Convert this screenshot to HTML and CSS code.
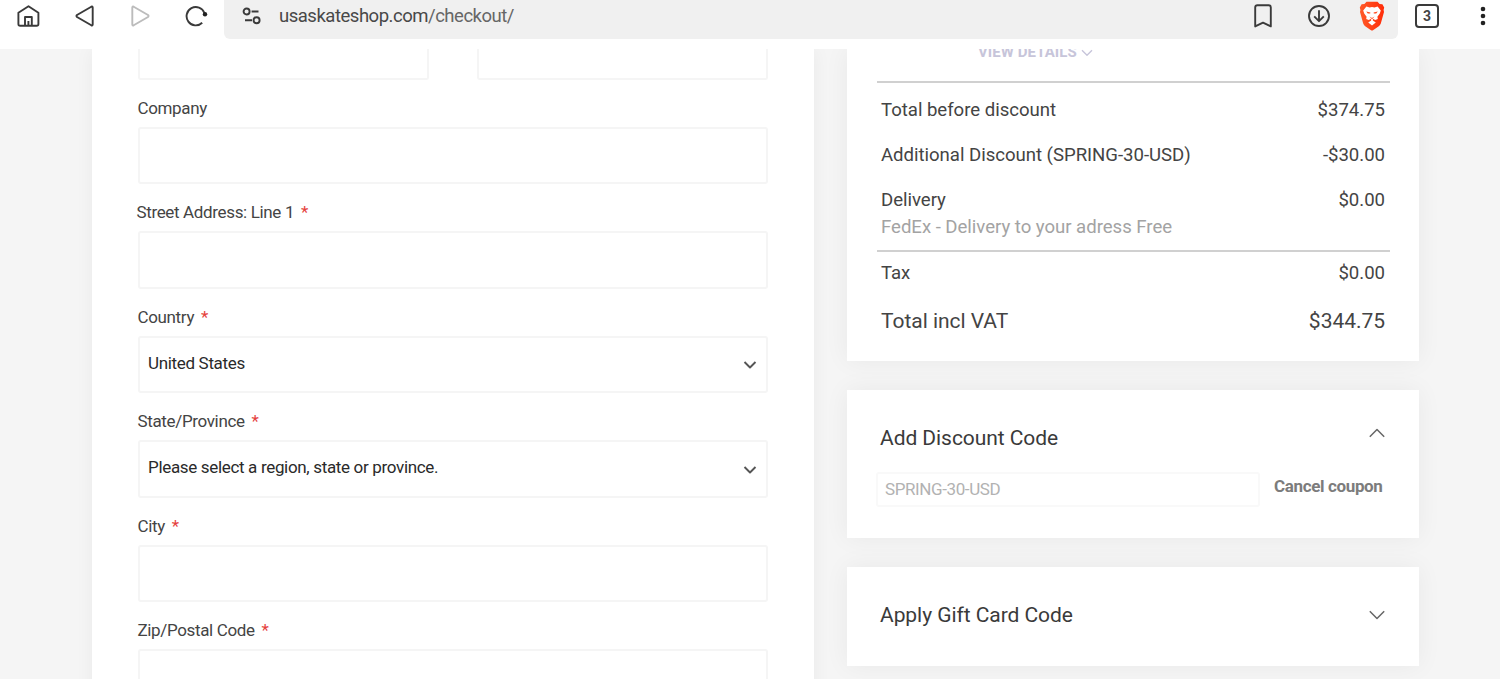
FILE: index.html
```
<!DOCTYPE html>
<html lang="en">
<head>
    <meta charset="UTF-8">
    <meta name="viewport" content="width=device-width, initial-scale=1.0">
    <title>Checkout</title>
    <link rel="stylesheet" href="styles.css">
</head>
<body>

    <header class="browser-bar">
        <nav class="nav-icons">
            <svg class="home" width="24" height="24" viewBox="0 0 24 24"><path d="M2.4 8.8 L12.5 2.2 L22.4 8.8 V20 Q22.4 21.8 20.6 21.8 H4.2 Q2.4 21.8 2.4 20 Z M9 21.8 V13 H15.8 V21.8 M12.4 17 V21.8"/></svg>
            <svg class="back" width="20" height="22" viewBox="0 0 20 22"><path d="M17.7 2.4 V19.6 Q17.7 21 16.3 20.3 L2 12 Q1 11 2 10 L16.3 1.7 Q17.7 1 17.7 2.4 Z"/></svg>
            <svg class="forward" width="20" height="22" viewBox="0 0 20 22"><path d="M2.3 2.4 V19.6 Q2.3 21 3.7 20.3 L18 12 Q19 11 18 10 L3.7 1.7 Q2.3 1 2.3 2.4 Z"/></svg>
            <svg class="reload" width="24" height="22" viewBox="0 0 24 22"><path d="M17.2 17.8 A9.2 9.2 0 1 1 19.4 8"/><circle cx="20" cy="9.2" r="2.2"/></svg>
        </nav>
        <div class="url-bar">
            <svg class="tune" width="20" height="18" viewBox="0 0 20 18"><circle cx="4.6" cy="4.5" r="3"/><circle cx="14.6" cy="13.3" r="3"/><path d="M9.6 4.5 H16.5 M3 13.3 H10"/></svg>
            <span class="url">usaskateshop.com<span class="url-path">/checkout/</span></span>
            <svg class="bookmark" width="20" height="24" viewBox="0 0 20 24"><path d="M2.2 3.4 Q2.2 1.2 4.4 1.2 H15.6 Q17.8 1.2 17.8 3.4 V22.4 L10 18.6 L2.2 22.4 Z"/></svg>
            <svg class="download" width="24" height="24" viewBox="0 0 24 24"><circle cx="12" cy="12" r="10"/><path d="M12 6.2 V17 M7.2 12.4 L12 17.2 L16.8 12.4"/></svg>
            <svg class="shield" width="26" height="30" viewBox="0 0 26 30">
                <defs><linearGradient id="lion"><stop offset="0" stop-color="#ff5a28"/><stop offset="1" stop-color="#ff2c08"/></linearGradient></defs>
                <path fill="url(#lion)" d="M7.5 0.8 H18.5 L20.6 3 L23.4 3.2 L25.2 6.6 L24.6 9 L25 11 L21.8 22.6 Q21.2 24.2 19.8 25.2 L14 29.2 Q13 29.8 12 29.2 L6.2 25.2 Q4.8 24.2 4.2 22.6 L1 11 L1.4 9 L0.8 6.6 L2.6 3.2 L5.4 3 Z"/>
                <path fill="#fff" d="M7.4 5.6 L10.6 6.4 L13 6 L15.4 6.4 L18.6 5.6 L21.8 9.4 L20.8 12.4 L18.4 15.8 L18.8 18 L16.2 19 L14 17.8 L13.8 19.6 L16.8 21.4 L13 24.4 L9.2 21.4 L12.2 19.6 L12 17.8 L9.8 19 L7.2 18 L7.6 15.8 L5.2 12.4 L4.2 9.4 Z"/>
                <path fill="#ff4a1e" d="M7.2 10.6 L11.4 11.6 L11.2 12.6 L8.8 12.6 Z M18.8 10.6 L14.6 11.6 L14.8 12.6 L17.2 12.6 Z M10.4 15.6 L13 17 L15.6 15.6 L13 18.2 Z"/>
            </svg>
        </div>
        <span class="tab-count">3</span>
        <svg class="menu" width="6" height="20" viewBox="0 0 6 20"><circle cx="3" cy="3" r="2.3"/><circle cx="3" cy="10" r="2.3"/><circle cx="3" cy="17" r="2.3"/></svg>
    </header>

    <main class="checkout">
        <form class="address-form">
            <div class="name-row">
                <div class="field"></div>
                <div class="field"></div>
            </div>
            <div class="group">
                <label class="label-company">Company</label>
                <div class="field"></div>
            </div>
            <div class="group">
                <label class="label-street">Street Address: Line 1 <span class="required">*</span></label>
                <div class="field"></div>
            </div>
            <div class="group">
                <label>Country <span class="required">*</span></label>
                <div class="field select">
                    <span class="country">United States</span>
                    <svg width="14" height="10" viewBox="0 0 14 10"><path d="M1.5 2 L7 7.5 L12.5 2"/></svg>
                </div>
            </div>
            <div class="group">
                <label>State/Province <span class="required">*</span></label>
                <div class="field select">
                    <span>Please select a region, state or province.</span>
                    <svg width="14" height="10" viewBox="0 0 14 10"><path d="M1.5 2 L7 7.5 L12.5 2"/></svg>
                </div>
            </div>
            <div class="group">
                <label>City <span class="required">*</span></label>
                <div class="field"></div>
            </div>
            <div class="group">
                <label>Zip/Postal Code <span class="required">*</span></label>
                <div class="field"></div>
            </div>
        </form>

        <aside class="sidebar">
            <section class="card summary">
                <div class="view-details">
                    <span>VIEW DETAILS</span>
                    <svg width="12" height="8" viewBox="0 0 12 8"><path d="M1 1.2 L6 6.2 L11 1.2"/></svg>
                </div>
                <div class="totals">
                    <div class="row"><span>Total before discount</span><span>$374.75</span></div>
                    <div class="row"><span class="discount">Additional Discount (SPRING-30-USD)</span><span>-$30.00</span></div>
                    <div class="row"><span>Delivery</span><span>$0.00</span></div>
                    <p class="note">FedEx - Delivery to your adress Free</p>
                </div>
                <div class="totals final">
                    <div class="row tax"><span>Tax</span><span>$0.00</span></div>
                    <div class="row grand"><span>Total incl VAT</span><span>$344.75</span></div>
                </div>
            </section>

            <section class="card discount-card">
                <div class="card-head">
                    <h2>Add Discount Code</h2>
                    <svg class="up" width="16" height="10" viewBox="0 0 16 10"><path d="M0.8 8.7 L8 1.5 L15.2 8.7"/></svg>
                </div>
                <div class="coupon">
                    <div class="coupon-input">SPRING-30-USD</div>
                    <a class="cancel">Cancel coupon</a>
                </div>
            </section>

            <section class="card gift-card">
                <div class="card-head">
                    <h2>Apply Gift Card Code</h2>
                    <svg width="16" height="10" viewBox="0 0 16 10"><path d="M0.8 1.3 L8 8.5 L15.2 1.3"/></svg>
                </div>
            </section>
        </aside>
    </main>

</body>
</html>
```
FILE: styles.css
```
* {
    box-sizing: border-box;
}
body {
    margin: 0;
    height: 679px;
    overflow: hidden;
    background-color: #f5f5f5;
    font-family: Roboto, "Liberation Sans", sans-serif;
    color: #444;
    white-space: nowrap;
}
svg {
    display: block;
    flex: none;
    fill: none;
    stroke: #3a3a3a;
    stroke-width: 1.9;
    stroke-linejoin: round;
}
.browser-bar {
    display: flex;
    align-items: flex-start;
    height: 49px;
    background-color: #fff;
}
.nav-icons {
    display: flex;
    align-items: center;
    width: 224px;
    height: 32px;
    padding-left: 16px;
}
.back {
    margin-left: 35px;
}
.forward {
    margin-left: 35px;
    stroke: #bcbcbc;
}
.reload {
    margin-left: 35px;
}
.reload circle {
    fill: #222;
    stroke: none;
}
.url-bar {
    display: flex;
    align-items: center;
    width: 1174px;
    height: 39px;
    padding: 0 13px 7px 18px;
    background-color: #f0f0f0;
    border-radius: 0 0 6px 6px;
}
.url {
    flex: 1;
    margin-left: 17px;
    font-size: 18.5px;
    line-height: 24px;
    letter-spacing: -0.48px;
    color: #484848;
}
.url-path {
    color: #666;
}
.download {
    margin-left: 34px;
}
.shield {
    margin-left: 28px;
    stroke: none;
}
.tab-count {
    width: 24px;
    height: 24px;
    margin: 4px 0 0 17px;
    border: 2px solid #3a3a3a;
    border-radius: 4px;
    font-size: 14px;
    font-weight: 700;
    line-height: 21px;
    text-align: center;
}
.menu {
    margin: 6px 0 0 41px;
    fill: #222;
    stroke: none;
}
.checkout {
    display: flex;
    align-items: flex-start;
    gap: 33px;
    height: 630px;
    padding-left: 92px;
    overflow: hidden;
}
.address-form {
    width: 722px;
    height: 720px;
    padding: 0 46px 0 45.5px;
    background-color: #fff;
    box-shadow: 0 0 18px rgba(0, 0, 0, 0.05);
}
.name-row {
    display: flex;
    gap: 48px;
    height: 30.5px;
}
.name-row .field {
    flex: 1;
    height: 31px;
    border-top: none;
    border-radius: 0 0 3px 3px;
}
.group {
    height: 104.5px;
    padding-top: 18px;
}
.group label {
    display: block;
    height: 29px;
    font-size: 17px;
    line-height: 20px;
    letter-spacing: -0.35px;
}
.group .label-street {
    margin-left: -1px;
}
.required {
    margin-left: 3px;
    color: #e5413c;
}
.field {
    height: 57.5px;
    border: 2px solid #f5f5f5;
    border-radius: 3px;
}
.select {
    display: flex;
    align-items: center;
    justify-content: space-between;
    padding: 0 9px 3px 8.5px;
    font-size: 17px;
    letter-spacing: -0.33px;
    color: #2a2a2a;
}
.select svg {
    margin-top: 5px;
    stroke: #555;
}
.sidebar {
    width: 572px;
}
.card {
    background-color: #fff;
    box-shadow: 0 0 24px rgba(0, 0, 0, 0.055);
}
/* keeps a lower card's shadow off the card above it */
.summary,
.discount-card {
    position: relative;
}
.summary {
    height: 312px;
    padding: 0 29px 0 30px;
}
.view-details {
    display: flex;
    height: 32px;
    padding-left: 101px;
    font-size: 15px;
    font-weight: 700;
    line-height: 16px;
    letter-spacing: 0.05px;
    color: #c7c5da;
}
.view-details span {
    margin-top: -5px;
}
.view-details svg {
    margin-left: 4px;
    stroke: #c7c5da;
    stroke-width: 1.4;
}
.totals {
    height: 169px;
    padding: 15px 5px 0 4px;
    border-top: 2px solid #d0d0d0;
    font-size: 18.6px;
    letter-spacing: -0.03px;
}
.row {
    display: flex;
    justify-content: space-between;
    height: 45px;
    line-height: 24px;
}
.note {
    margin: -18px 0 0;
    line-height: 24px;
    color: #a3a3a3;
}
.final {
    padding-top: 9px;
}
.tax {
    height: 48px;
}
.grand {
    font-size: 21px;
}
.discount-card {
    height: 148px;
    margin-top: 29px;
    padding: 35px 34px 0 33px;
}
.gift-card {
    height: 99px;
    margin-top: 29px;
    padding: 35px 34px 0 33px;
}
.card-head {
    display: flex;
    align-items: center;
    justify-content: space-between;
    height: 26px;
}
.card-head svg {
    stroke: #666;
    stroke-width: 1.5;
}
.card-head .up {
    margin-top: -10px;
}
h2 {
    margin: 0;
    font-size: 21px;
    font-weight: 400;
    letter-spacing: -0.06px;
    color: #3a3a3a;
}
.coupon {
    display: flex;
    align-items: center;
    margin: 21px 0 0 -4px;
}
.coupon-input {
    width: 384px;
    height: 35px;
    padding-left: 7px;
    border: 2px solid #f9f9f9;
    border-radius: 3px;
    font-size: 17px;
    line-height: 30px;
    letter-spacing: -0.4px;
    color: #b2b2b2;
}
.cancel {
    margin: -8px 0 0 14px;
    font-size: 17px;
    font-weight: 700;
    letter-spacing: -0.36px;
    color: #7c7c7c;
}
```
